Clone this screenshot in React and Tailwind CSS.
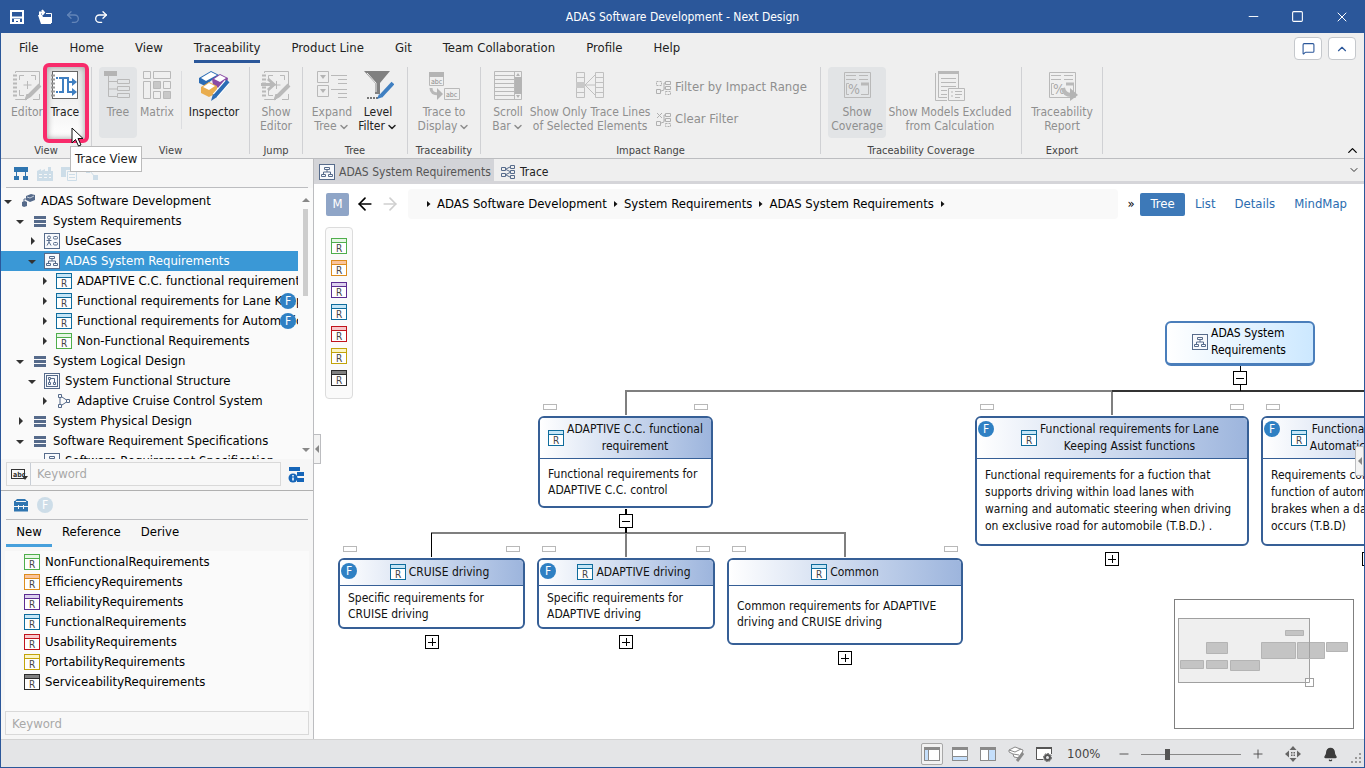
import {
  ArrowLeft,
  ArrowRight,
  Bell,
  ChevronDown,
  ChevronUp,
  MessageSquare,
  Minus,
  Plus,
  Redo2,
  Square,
  Undo2,
  X,
} from "lucide-react";

const COLORS = {
  green: ["#4fae4c", "#e6f6e4"],
  orange: ["#dc8c1e", "#fbc49c"],
  purple: ["#5c2d91", "#dcd0ee"],
  blue: ["#0f6c9c", "#c6e6f7"],
  red: ["#c0141c", "#f8c8cc"],
  yellow: ["#c2a30a", "#fbf5c4"],
  black: ["#2b2b2b", "#808080"],
};

/* ---------- model icons, 16px ---------- */

function ReqIcon({ color = "blue" }) {
  const [line, band] = COLORS[color];
  return (
    <svg width="16" height="16" className="shrink-0">
      <rect x=".5" y=".5" width="15" height="15" fill="#fff" stroke={line} />
      <rect x="1" y="1" width="14" height="3" fill={band} />
      <path d="M1 4.5h14" stroke={line} />
      <text x="5" y="14" fontSize="10" fill="#444">R</text>
    </svg>
  );
}

function HierarchyIcon() {
  return (
    <svg width="16" height="16" className="shrink-0" fill="none" stroke="#566b8b">
      <rect x=".5" y=".5" width="15" height="15" fill="#f7f9fc" />
      <path d="M5.500 3.500h5v2h-5zM2.500 10.500h4v2h-4zM9.500 10.500h4v2h-4zM8 6v2M4.500 10V8h7v2" />
    </svg>
  );
}

function UseCaseIcon() {
  return (
    <svg width="16" height="16" className="shrink-0" fill="none" stroke="#566b8b">
      <rect x=".5" y=".5" width="15" height="15" fill="#f7f9fc" />
      <circle cx="5" cy="4.500" r="1.500" />
      <path d="M5 6v3M2.500 7.500h5M5 9l-2 3.500M5 9l2 3.500" />
      <rect x="9.500" y="3.500" width="4" height="2.500" rx="1" />
      <rect x="9.500" y="9.500" width="4" height="2.500" rx="1" />
    </svg>
  );
}

function StructureIcon() {
  return (
    <svg width="16" height="16" className="shrink-0" fill="none" stroke="#566b8b">
      <rect x=".5" y=".5" width="15" height="15" fill="#f7f9fc" />
      <rect x="2.500" y="2.500" width="11" height="11" />
      <path d="M4.500 4.500h2v2h-2zM5.500 7v2M4.500 9.500h2v2h-2zM7 5.500h3.500V9M9.500 9.500h2v2h-2z" />
    </svg>
  );
}

function FlowIcon() {
  return (
    <svg width="16" height="16" className="shrink-0" fill="none" stroke="#566b8b">
      <path d="M2.500 1.500h3v3h-3zM2.500 11.500h3v3h-3zM10.500 6.500h3v3h-3zM4 5v6M6 4l4.500 3M6 12l4.500-3" />
    </svg>
  );
}

function LinesIcon() {
  return (
    <svg width="16" height="16" className="shrink-0" fill="#566b8b">
      <path d="M2 3h12v3H2zM2 7h12v3H2zM2 11h12v3H2z" />
    </svg>
  );
}

function ProjectIcon() {
  return (
    <svg width="16" height="16" className="shrink-0" fill="#566b8b">
      <path d="M6 3l5-2 4 1v5l-5 2-4-2z" />
      <path d="M2 9l3-1 2 1v4l-3 1-2-1z" />
      <path d="M7 4l3 1 4-2" stroke="#c5cedb" fill="none" />
      <path d="M4 9V6h3" stroke="#566b8b" fill="none" />
    </svg>
  );
}

function TraceTabIcon() {
  return (
    <svg width="16" height="16" className="shrink-0" fill="none" stroke="#566b8b">
      <path d="M1.500 3.500h4v3h-4zM1.500 9.500h4v3h-4zM10.500 1.500h4v3h-4zM10.500 6.500h4v3h-4zM10.500 11.500h4v3h-4zM6 5l4-2M6 5.500l4 2M6 10.500l4-2M6 11l4 2" />
    </svg>
  );
}

function FBadge({ muted }) {
  return (
    <svg width="16" height="16" className="shrink-0">
      <circle cx="8" cy="8" r="8" fill={muted ? "#cddde8" : "#2f80c3"} />
      <text x="8" y="12" fontSize="12" fill="#fff" textAnchor="middle">F</text>
    </svg>
  );
}

/* ---------- ribbon icons, 32px ---------- */

function Svg32({ children, stroke = "#b9b9b9" }) {
  return (
    <svg width="32" height="32" fill="none" stroke={stroke} className="shrink-0">
      {children}
    </svg>
  );
}

function EditorIcon({ arrow }) {
  return (
    <Svg32>
      <path d="M4.500 3V1.500h24V16M4.500 29v.5H16M28.500 24v5.500H22" />
      <path d="M2 5.500h4M2 9.500h4M2 13.500h4M2 17.500h4M2 21.500h4M2 25.500h4" strokeWidth="2" />
      <path d="M8.500 10V5.500H13M20 5.500h4.500V10M8.500 20v5.500H13M16.500 11v8M12.500 15h8" />
      <path d="M29 15L18 26" strokeWidth="4" />
      <path d="M16 24l3 3-5 3z" fill="#b9b9b9" />
      {arrow && <path d="M1 14.500h12M8 9l6 5.500L8 20" strokeWidth="3" />}
    </Svg32>
  );
}

function TraceIcon() {
  return (
    <Svg32 stroke="#666">
      <rect x="3.500" y="1.500" width="25" height="27" fill="#fff" />
      <path d="M2 5.500h4M2 9.500h4M2 13.500h4M2 17.500h4M2 21.500h4M2 25.500h4" stroke="#999" strokeWidth="2" />
      <g stroke="#3f7fc1" strokeWidth="2">
        <path d="M7 8h2M7 22h2" />
        <path d="M10 8h9v14h5M10 22h4V8M19 12h5" />
      </g>
      <path d="M23 8l5 4-5 4zM23 18l5 4-5 4z" fill="#3f7fc1" stroke="none" />
    </Svg32>
  );
}

function TreeIcon() {
  return (
    <Svg32>
      <rect x="2" y="1" width="13" height="5" fill="#b4b4b4" stroke="none" />
      <path d="M6.500 6v20.500H15M6.500 11.500H15M6.500 19H15M15.500 9.500h12v4h-12zM15.500 16.500h12v4h-12zM15.500 23.500h12v4h-12z" />
    </Svg32>
  );
}

function MatrixIcon() {
  return (
    <Svg32>
      <path d="M2.500 1.500h7v7h-7zM12.500 1.500h17v7h-17zM2.500 11.500h7v17h-7zM12.500 21.500h7v7h-7zM22.500 11.500h7v7h-7z" />
      <path d="M12.500 11.500h7v7h-7zM22.500 21.500h7v7h-7z" fill="#c8c8c8" />
    </Svg32>
  );
}

function InspectorIcon() {
  return (
    <svg width="34" height="32" className="shrink-0" strokeLinejoin="round">
      <path d="M2 8L14 1l8 4-11 8-3 3-6-3z" fill="#2b6cb5" />
      <path d="M4 8l10-6 6 3L9 11z" fill="#fff" />
      <path d="M15 9l8-5 8 4-1 6-7 5-7-4z" fill="#8a4aa5" />
      <path d="M17 9l6-4 6 3-6 4z" fill="#fff" />
      <path d="M4 17l8-5 8 4v7l-8 4-8-4z" fill="#e9ad4e" />
      <path d="M6 17l6-4 6 3-6 4z" fill="#fff" />
      <path d="M30 12L18 26" stroke="#fff" strokeWidth="6" />
      <path d="M31 11L18 26" stroke="#2b6cb5" strokeWidth="4" />
      <path d="M16 24l4 3-6 4z" fill="#2b6cb5" />
    </svg>
  );
}

function ExpandTreeIcon() {
  return (
    <Svg32>
      <path d="M1.500 1.500h11v11h-11zM1.500 15.500h11v11h-11z" />
      <path d="M4 5h6l-3 4zM4 19h6l-3 4z" fill="#b4b4b4" stroke="none" />
      <path d="M15 5.500h16M22 9.500h9M22 13.500h9M15 19.500h16M22 23.500h9M22 27.500h9" />
    </Svg32>
  );
}

function LevelFilterIcon() {
  return (
    <Svg32>
      <path d="M2 1h26L18 13v11h-5V13z" fill="#808080" stroke="none" />
      <path d="M5 3l9 10v9" stroke="#f0f0f0" />
      <path d="M5 28h11" stroke="#777" strokeWidth="2" strokeDasharray="2 1" />
      <path d="M31 13L19 26" stroke="#3f7fc1" strokeWidth="4" />
      <path d="M17 24l4 3-6 2z" fill="#3f7fc1" stroke="none" />
    </Svg32>
  );
}

function TraceDisplayIcon() {
  return (
    <Svg32>
      <path d="M1.500 2.500h14v13h-14zM16.500 18.500h15v11h-15z" />
      <rect x="1" y="2" width="15" height="5" fill="#b4b4b4" stroke="none" />
      <text x="3" y="14" fontSize="7" fill="#8a8a8a" stroke="none">abc</text>
      <text x="18" y="27" fontSize="7" fill="#8a8a8a" stroke="none">abc</text>
      <path d="M3 18c0 5 3 6 8 6" strokeWidth="3" />
      <path d="M9 18l6 6-6 6z" fill="#b4b4b4" stroke="none" />
    </Svg32>
  );
}

function ScrollBarIcon() {
  return (
    <Svg32>
      <path d="M2.500 1.500h27v28h-27zM2 5.500h20M2 9.500h20M2 13.500h20M2 17.500h20M2 21.500h20M2 25.500h20M22.500 1v28" />
      <rect x="23" y="7" width="7" height="17" fill="#b4b4b4" stroke="none" />
      <path d="M26 3l2 3h-4zM26 28l2-3h-4z" fill="#b4b4b4" stroke="none" />
    </Svg32>
  );
}

function TraceLinesIcon() {
  return (
    <Svg32 stroke="#c0c0c0">
      <path d="M2.500 2.500h8v25h-8zM2 7.500h8M2 12.500h8M2 17.500h8M2 22.500h8M21.500 2.500h8v25h-8zM22 7.500h8M22 12.500h8M22 17.500h8M22 22.500h8" />
      <rect x="2" y="12" width="9" height="6" fill="#c8c8c8" stroke="none" />
      <path d="M21 5L11 15l10 10M11 15h10" />
    </Svg32>
  );
}

function CoverageIcon({ arrow }) {
  return (
    <Svg32>
      <path d="M3.500 2.500h26v25h-26z" />
      <path d="M5 5.500h10M18 5.500h9M5 9.500h10M18 9.500h9" />
      <path d="M8 13.500H5.500v11H8M20 13.500h7.500v11H20" />
      <path d="M20 14h8" strokeWidth="3" />
      <text x="7" y="24" fontSize="14" fill="#a8a8a8" stroke="none">%</text>
      {arrow && <path d="M17 18c1 5 4 7 8 7" strokeWidth="4" />}
      {arrow && <path d="M24 18l8 7-8 6z" fill="#b4b4b4" stroke="none" />}
    </Svg32>
  );
}

function ExcludedIcon() {
  return (
    <Svg32>
      <path d="M1.500 3v27.500H13M4.500 1.500h20V18M4.500 3v24.500H13" />
      <path d="M4 2.500h21" strokeWidth="3" />
      <path d="M7 8.500h15M7 12.500h15M7 16.500h15M7 20.500h6M7 24.500h6" />
      <path d="M14.500 18.500h16v12h-16z" fill="#f0f0f0" />
      <path d="M17 22h2M17 26h2M21 21.500h7M21 24.500h7M21 27.500h5" />
    </Svg32>
  );
}

function ImpactIcon({ clear }) {
  return (
    <svg width="15" height="15" fill="none" stroke="#b0b0b0" className="shrink-0">
      <path d={clear ? "M1 1l5 5M6 1L1 6" : "M.5 1.500h5v4h-5z"} strokeDasharray={clear ? "none" : "2 1"} />
      <path d="M.5 9.500h4v4h-4zM9.500 1.500h5v3h-5zM9.500 6.500h5v3h-5zM5 11l3-1V3h1M8 8h1" />
      <path d="M9.500 11.500h5v3h-5z" strokeDasharray="2 1" />
    </svg>
  );
}

function SmallChevron() {
  return <ChevronDown className="ml-px inline-block" size={12} strokeWidth={3} />;
}

/* ---------- ribbon ---------- */

function RibbonButton({ icon, lines, width, enabled, active, menu, children }) {
  return (
    <button
      className={`relative flex h-[71px] shrink-0 flex-col items-center rounded-sm pt-[3px] text-[12px] leading-[14px] whitespace-nowrap ${width} ${
        active ? "bg-[#e2e4e6]" : ""
      } ${enabled ? "text-[#222]" : "text-[#8f8f8f]"}`}
    >
      {children}
      <span className="relative">{icon}</span>
      <span className="relative mt-[3px]">
        {lines.map((line, i) => (
          <span key={line} className="block">
            {line}
            {menu && i === lines.length - 1 && <SmallChevron />}
          </span>
        ))}
      </span>
    </button>
  );
}

function RibbonGroup({ title, width, children }) {
  return (
    <section className={`h-[87px] shrink-0 border-r border-[#d0d1d4] ${width}`}>
      <div className="flex h-[71px] justify-center">{children}</div>
      <h2 className="text-center text-[11px] leading-[26px] whitespace-nowrap text-[#444]">{title}</h2>
    </section>
  );
}

function Ribbon() {
  return (
    <div className="flex h-24 shrink-0 border-b border-[#bcbdc0] pt-1">
      <RibbonGroup title="View" width="w-[91px]">
        <RibbonButton icon={<EditorIcon />} lines={["Editor"]} width="w-[38px]" />
        <RibbonButton icon={<TraceIcon />} lines={["Trace"]} width="w-[38px]" enabled>
          <span className="absolute -top-1 -left-[3px] h-20 w-[46px] rounded-md border-4 border-[#f82b6b] bg-linear-to-b from-[#e4e4e4] to-white shadow-[inset_0_0_6px_#999]" />
          <span className="absolute top-[79px] left-6 z-20 border border-[#bbb] bg-white px-1 py-1 text-[13px] leading-4 text-[#222]">
            Trace View
          </span>
          <svg className="absolute top-[60px] left-[25px] z-30" width="14" height="20">
            <path d="M1 1v15l3.500-3.500 3 6.500 2.500-1-3-6.500h5z" fill="#fff" stroke="#111" />
          </svg>
        </RibbonButton>
      </RibbonGroup>
      <RibbonGroup title="View" width="w-[158px]">
        <RibbonButton icon={<TreeIcon />} lines={["Tree"]} width="w-[38px]" active />
        <RibbonButton icon={<MatrixIcon />} lines={["Matrix"]} width="w-10" />
        <span className="mx-1 mt-1 h-[58px] w-px bg-[#dcdde0]" />
        <RibbonButton icon={<InspectorIcon />} lines={["Inspector"]} width="w-14" enabled />
      </RibbonGroup>
      <RibbonGroup title="Jump" width="w-[53px]">
        <RibbonButton icon={<EditorIcon arrow />} lines={["Show", "Editor"]} width="w-11" />
      </RibbonGroup>
      <RibbonGroup title="Tree" width="w-[105px]">
        <RibbonButton icon={<ExpandTreeIcon />} lines={["Expand", "Tree"]} width="w-[46px]" menu />
        <RibbonButton icon={<LevelFilterIcon />} lines={["Level", "Filter"]} width="w-[46px]" menu enabled />
      </RibbonGroup>
      <RibbonGroup title="Traceability" width="w-[73px]">
        <RibbonButton icon={<TraceDisplayIcon />} lines={["Trace to", "Display"]} width="w-14" menu />
      </RibbonGroup>
      <RibbonGroup title="Impact Range" width="w-[340px]">
        <RibbonButton icon={<ScrollBarIcon />} lines={["Scroll", "Bar"]} width="w-11" menu />
        <RibbonButton
          icon={<TraceLinesIcon />}
          lines={["Show Only Trace Lines", "of Selected Elements"]}
          width="w-[120px]"
        />
        <div className="flex flex-col gap-4 pt-3 pr-2 pl-1.5 text-[13px] leading-4 whitespace-nowrap text-[#8f8f8f]">
          <button className="flex items-center gap-1">
            <ImpactIcon /> Filter by Impact Range
          </button>
          <button className="flex items-center gap-1">
            <ImpactIcon clear /> Clear Filter
          </button>
        </div>
      </RibbonGroup>
      <RibbonGroup title="Traceability Coverage" width="w-[201px]">
        <RibbonButton icon={<CoverageIcon />} lines={["Show", "Coverage"]} width="w-[58px]" active />
        <RibbonButton
          icon={<ExcludedIcon />}
          lines={["Show Models Excluded", "from Calculation"]}
          width="w-32"
        />
      </RibbonGroup>
      <RibbonGroup title="Export" width="w-[81px]">
        <RibbonButton icon={<CoverageIcon arrow />} lines={["Traceability", "Report"]} width="w-[68px]" />
      </RibbonGroup>
      <button aria-label="Collapse ribbon" className="mr-1 ml-auto self-end">
        <ChevronUp size={15} />
      </button>
    </div>
  );
}

/* ---------- title bar and menu ---------- */

function TitleBar() {
  return (
    <header className="grid h-[33px] shrink-0 grid-cols-3 items-center bg-[#2b579a] text-white">
      <div className="flex items-center gap-3 pl-2">
        <button aria-label="Save">
          <svg width="16" height="16" fill="none" stroke="#fff" strokeWidth="2">
            <path d="M2 2h12v12H2zM2 8.500h12" />
            <path d="M6 14v-3h4v3" />
          </svg>
        </button>
        <button aria-label="Open">
          <svg width="16" height="16" fill="none" stroke="#fff">
            <path d="M3 7V3.500h4M5 1l2 2.500L5 6" strokeWidth="2" />
            <path d="M9 4.500h5.500V14" />
            <path d="M1 6l3 9h10V8H6L5 6z" fill="#fff" stroke="none" />
          </svg>
        </button>
        <button aria-label="Undo" className="text-[#6385b8]">
          <Undo2 size={16} />
        </button>
        <button aria-label="Redo">
          <Redo2 size={16} />
        </button>
      </div>
      <h1 className="text-center text-[12px] leading-4 whitespace-nowrap">ADAS Software Development - Next Design</h1>
      <div className="flex items-center justify-end gap-[30px] pr-3.5">
        <button aria-label="Minimize"><Minus size={15} strokeWidth={1.500} /></button>
        <button aria-label="Maximize"><Square size={13} strokeWidth={2} /></button>
        <button aria-label="Close"><X size={16} strokeWidth={1.500} /></button>
      </div>
    </header>
  );
}

const MENU = ["File", "Home", "View", "Traceability", "Product Line", "Git", "Team Collaboration", "Profile", "Help"];

function MenuBar() {
  return (
    <nav className="flex h-[30px] shrink-0 items-start gap-[31px] pl-[18px] text-[13px] text-[#222]">
      {MENU.map((item) => (
        <button
          key={item}
          className={`h-[30px] border-b-3 leading-[29px] whitespace-nowrap ${
            item === "Traceability" ? "border-[#2b579a]" : "border-transparent"
          }`}
        >
          {item}
        </button>
      ))}
      <div className="mt-1 mr-2 ml-auto flex gap-1.5 text-[#2b579a]">
        <button aria-label="Feedback" className="flex h-[23px] w-7 items-center justify-center rounded-sm border border-[#c5c8cc] bg-white">
          <MessageSquare size={13} />
        </button>
        <button aria-label="Collapse menu" className="flex h-[23px] w-7 items-center justify-center rounded-sm border border-[#c5c8cc] bg-white">
          <ChevronUp size={14} />
        </button>
      </div>
    </nav>
  );
}

/* ---------- left panel ---------- */

const TREE = [
  { level: 0, label: "ADAS Software Development", icon: <ProjectIcon />, open: true },
  { level: 1, label: "System Requirements", icon: <LinesIcon />, open: true },
  { level: 2, label: "UseCases", icon: <UseCaseIcon /> },
  { level: 2, label: "ADAS System Requirements", icon: <HierarchyIcon />, open: true, selected: true },
  { level: 3, label: "ADAPTIVE C.C. functional requirement", icon: <ReqIcon /> },
  { level: 3, label: "Functional requirements for Lane Keeping", icon: <ReqIcon />, feature: true },
  { level: 3, label: "Functional requirements for Automatic", icon: <ReqIcon />, feature: true },
  { level: 3, label: "Non-Functional Requirements", icon: <ReqIcon color="green" /> },
  { level: 1, label: "System Logical Design", icon: <LinesIcon />, open: true },
  { level: 2, label: "System Functional Structure", icon: <StructureIcon />, open: true },
  { level: 3, label: "Adaptive Cruise Control System", icon: <FlowIcon /> },
  { level: 1, label: "System Physical Design", icon: <LinesIcon /> },
  { level: 1, label: "Software Requirement Specifications", icon: <LinesIcon />, open: true },
  { level: 2, label: "Software Requirement Specification", icon: <HierarchyIcon />, leaf: true },
];

const INDENT = ["pl-0", "pl-3", "pl-6", "pl-9"];

function TreeRow({ item }) {
  return (
    <li
      className={`relative flex h-5 items-center overflow-hidden whitespace-nowrap ${INDENT[item.level]} ${
        item.selected ? "bg-[#3a98d6] text-white" : "text-black"
      }`}
    >
      <svg width="15" height="10" className="mr-1 shrink-0" fill="#333">
        {!item.leaf && <path d={item.open ? "M3 4h8l-4 4z" : "M6 1l4 4-4 4z"} />}
      </svg>
      {item.icon}
      <span className="ml-[5px]">{item.label}</span>
      {item.feature && (
        <span className="absolute right-0.5">
          <FBadge />
        </span>
      )}
    </li>
  );
}

const PALETTE = [
  ["NonFunctionalRequirements", "green"],
  ["EfficiencyRequirements", "orange"],
  ["ReliabilityRequirements", "purple"],
  ["FunctionalRequirements", "blue"],
  ["UsabilityRequirements", "red"],
  ["PortabilityRequirements", "yellow"],
  ["ServiceabilityRequirements", "black"],
];

function LeftPanel() {
  return (
    <aside className="flex w-[313px] shrink-0 flex-col border-r border-[#bcbdc0] bg-[#f6f6f6] text-[13px]">
      <div className="mx-[5px] flex h-[29px] shrink-0 items-center gap-2 border-b border-[#bcbdc0] pl-[7px]">
        <svg width="16" height="16" fill="#2f75b0">
          <path d="M1 2h14v5H1zM1 11h5v4H1zM10 11h5v4h-5z" />
          <path d="M3.500 7v4M12.500 7v4" stroke="#2f75b0" />
        </svg>
        <svg width="16" height="16" fill="#cddde8">
          <path d="M0 6l4-2v2l4-2v2h3V2h3v4h2v10H0z" />
          <path d="M2 9.500h12M2 12.500h12" stroke="#f6f6f6" strokeDasharray="3 2" />
        </svg>
        <svg width="16" height="16" fill="#cddde8">
          <path d="M0 2h10v3H5v7H0z" />
          <path d="M6.500 6.500h9v9h-9zM8 9.500h6M8 12.500h6" fill="#f6f6f6" stroke="#cddde8" />
        </svg>
        <svg width="16" height="16" fill="#cddde8">
          <path d="M1 4h4v4H1zM8 1h4v4H8zM8 10h5v5H8z" />
          <path d="M5 6l5 6" stroke="#cddde8" />
        </svg>
      </div>
      <div className="flex h-[271px] shrink-0 overflow-hidden bg-[#fafafa] pt-[3px]">
        <ul className="min-w-0 flex-1">
          {TREE.map((item) => (
            <TreeRow key={item.label} item={item} />
          ))}
        </ul>
        <div className="flex w-[15px] shrink-0 flex-col items-center justify-between pt-1.5 pb-1.5">
          <svg width="8" height="6" fill="#888"><path d="M0 5h8L4 1z" /></svg>
          <span className="mt-1.5 mb-auto h-[87px] w-[5px] bg-[#cdcdcd]" />
          <svg width="8" height="6" fill="#888"><path d="M0 1h8L4 5z" /></svg>
        </div>
      </div>
      <div className="flex h-8 shrink-0 items-start gap-[7px] border-b border-[#b0b0b0] pt-[3px] pl-[5px]">
        <div className="flex h-6 w-[275px] items-center border border-[#d9d9d9] bg-[#f8f8f8]">
          <button aria-label="Match text" className="flex h-full w-6 items-center justify-center border-r border-[#c8ced6]">
            <svg width="18" height="12" fill="none" stroke="#333">
              <rect x="1.500" y="1.500" width="13" height="9" />
              <text x="3" y="9" fontSize="7" fontWeight="bold" fill="#333" stroke="none">abc</text>
              <path d="M12 8h6l-3 4z" fill="#333" stroke="none" />
            </svg>
          </button>
          <input aria-label="Search model" placeholder="Keyword" className="min-w-0 flex-1 px-1.5 outline-none placeholder:text-[#a8a8a8]" />
        </div>
        <button aria-label="Model info" className="mt-1">
          <svg width="17" height="17" fill="#1565b8">
            <path d="M1 1h11v4H1zM9 6h7v4H9zM9 12h7v4H9z" />
            <circle cx="5" cy="12" r="4.500" />
            <path d="M5 9v1.500M5 11.500v3" stroke="#fff" strokeWidth="1.500" />
          </svg>
        </button>
      </div>
      <div className="mx-[5px] flex h-[29px] shrink-0 items-center gap-2 border-b border-[#bcbdc0] pl-[7px]">
        <svg width="16" height="16" fill="#2f75b0">
          <path d="M2 4l2-2h8l2 2h1v5H1V4zM1 10h14v4.500H1z" />
          <path d="M3 4.500h10" stroke="#f6f6f6" />
          <path d="M5.500 8v4M10.500 8v4" stroke="#f6f6f6" />
        </svg>
        <FBadge muted />
      </div>
      <div role="tablist" className="flex h-[27px] shrink-0 pl-[5px]">
        <button role="tab" className="w-[46px] border-b-3 border-[#47a0dc]">New</button>
        <button role="tab" className="ml-2.5 border-b-3 border-transparent">Reference</button>
        <button role="tab" className="ml-5 border-b-3 border-transparent">Derive</button>
      </div>
      <ul className="mx-1 mt-1 flex-1 bg-[#fafafa] pt-px">
        {PALETTE.map(([label, color]) => (
          <li key={label} className="flex h-5 items-center gap-[5px] pl-[19px]">
            <ReqIcon color={color} />
            {label}
          </li>
        ))}
      </ul>
      <input
        aria-label="Search palette"
        placeholder="Keyword"
        className="mx-1 mb-1 h-6 shrink-0 border border-[#d9d9d9] bg-[#f8f8f8] px-1.5 outline-none placeholder:text-[#a8a8a8]"
      />
    </aside>
  );
}

/* ---------- diagram ---------- */

const NODES = [
  { x: 224, y: 192, w: 175, h: 92, head: 40, title: ["ADAPTIVE C.C. functional", "requirement"], text: ["Functional requirements for", "ADAPTIVE C.C. control"], open: true },
  { x: 661, y: 192, w: 274, h: 130, head: 40, feature: true, title: ["Functional requirements for Lane", "Keeping Assist functions"], text: ["Functional requirements for a fuction that", "supports driving within load lanes with", "warning and automatic steering when driving", "on exclusive road for automobile (T.B.D.) ."] },
  { x: 947, y: 192, w: 216, h: 130, head: 40, feature: true, title: ["Functional requirements for", "Automatic Braking functions"], text: ["Requirements concerning", "function of automatic", "brakes when a danger", "occurs (T.B.D)"] },
  { x: 24, y: 334, w: 187, h: 71, head: 25, feature: true, title: ["CRUISE driving"], text: ["Specific requirements for", "CRUISE driving"] },
  { x: 223, y: 334, w: 178, h: 71, head: 25, feature: true, title: ["ADAPTIVE driving"], text: ["Specific requirements for", "ADAPTIVE driving"] },
  { x: 413, y: 334, w: 236, h: 87, head: 25, title: ["Common"], text: ["Common requirements for ADAPTIVE", "driving and CRUISE driving"] },
];

function Expander({ open }) {
  return (
    <button aria-label={open ? "Collapse" : "Expand"} className="absolute top-full left-1/2 mt-2 -ml-[7px] block">
      <svg width="14" height="14" fill="#fff" stroke="#000">
        <rect x=".5" y=".5" width="13" height="13" />
        <path d={open ? "M3 7.500h8" : "M3 7.500h8M7.500 3v8"} />
      </svg>
    </button>
  );
}

function Node({ node }) {
  return (
    <article
      className="absolute flex flex-col rounded-md border-2 border-[#365f96] bg-white text-[12px] whitespace-nowrap text-[#111]"
      style={{ left: node.x, top: node.y, width: node.w, height: node.h }}
    >
      <span className="absolute -top-3.5 left-[3px] h-1.5 w-3.5 border border-[#b8b8b8] bg-white" />
      <span className="absolute -top-3.5 right-[3px] h-1.5 w-3.5 border border-[#b8b8b8] bg-white" />
      {node.feature && (
        <span className="absolute top-[3px] left-px">
          <FBadge />
        </span>
      )}
      <h3
        className={`flex shrink-0 items-center justify-center gap-[3px] rounded-t-sm border-b border-[#365f96] bg-linear-to-r from-white to-[#9db5dd] pb-px leading-[17px] ${
          node.feature ? "pl-4" : ""
        }`}
        style={{ height: node.head + 1 }}
      >
        <ReqIcon />
        <span className="text-center">
          {node.title.map((line) => (
            <span key={line} className="block">{line}</span>
          ))}
        </span>
      </h3>
      <p className={`my-auto px-2 pb-0.5 ${node.text.length > 2 ? "leading-[17px]" : "leading-4"}`}>
        {node.text.map((line) => (
          <span key={line} className="block">{line}</span>
        ))}
      </p>
      <Expander open={node.open} />
    </article>
  );
}

function Connectors() {
  return (
    <svg className="absolute inset-0 h-full w-full" fill="none" stroke="#7f7f7f" strokeWidth="2">
      <path d="M312 191V167H798M798 167v24" />
      <path d="M798 167H1400" stroke="#333" />
      <path d="M312 333v-24M312 309h219v24M312 309H117" />
      <path d="M117.500 309v24M926.500 142v25" stroke="#000" strokeWidth="1" />
      <path d="M312 285v24" stroke="#000" />
    </svg>
  );
}

function MiniMap() {
  return (
    <svg className="absolute right-[9px] bottom-[9px]" width="181" height="131" fill="#fff">
      <rect x=".5" y=".5" width="179" height="129" stroke="#808080" />
      <rect x="4.500" y="19.500" width="131" height="64" fill="#efefef" stroke="#a0a0a0" />
      <g fill="#c4c4c4" stroke="#b4b4b4">
        <path d="M111.500 31.500h18v5h-18zM32.500 43.500h21v11h-21zM87.500 43.500h34v16h-34zM123.500 43.500h27v16h-27zM152.500 43.500h21v9h-21zM6.500 61.500h23v8h-23zM32.500 61.500h21v8h-21zM56.500 61.500h29v10h-29z" />
      </g>
      <path d="M135.500 43v16" stroke="#a0a0a0" />
      <rect x="131.500" y="79.500" width="8" height="8" stroke="#a0a0a0" />
      <path d="M135.500 79v4.500H131" stroke="#a0a0a0" />
    </svg>
  );
}

function Crumb({ children }) {
  return (
    <li className="flex items-center">
      <svg width="5" height="8" className="mx-1.5" fill="#111"><path d="M1 1l3.500 3L1 7z" /></svg>
      <a href="#">{children}</a>
    </li>
  );
}

function Canvas() {
  return (
    <div className="relative min-h-0 flex-1 overflow-hidden">
      <Connectors />
      <div className="relative mt-[3px] ml-[11px] flex w-7 flex-col items-center gap-1.5 rounded-sm border border-[#dcdcdc] bg-[#fafafa] pt-2.5 pb-3">
        {PALETTE.map(([label, color]) => (
          <button key={label} aria-label={label} className="block">
            <ReqIcon color={color} />
          </button>
        ))}
      </div>
      <article className="absolute top-[97px] left-[851px] flex h-[45px] w-[150px] items-center justify-center gap-[3px] rounded-md border-2 border-b-3 border-[#4a7ebb] bg-linear-to-r from-white to-[#cce8ff] pr-0.5 pb-0.5 text-[12px] leading-[17px] whitespace-nowrap">
        <HierarchyIcon />
        <span>
          <span className="block">ADAS System</span>
          <span className="block">Requirements</span>
        </span>
        <Expander open />
      </article>
      {NODES.map((node) => (
        <Node key={node.title.join(" ")} node={node} />
      ))}
      <MiniMap />
      <button aria-label="Hide left panel" className="absolute top-[210px] -left-px flex h-[30px] w-2 items-center justify-center border border-[#bcbdc0] bg-[#f3f3f3]">
        <svg width="4" height="8" fill="#888"><path d="M4 0v8L0 4z" /></svg>
      </button>
      <button aria-label="Show right panel" className="absolute top-[222px] right-0 flex h-[30px] w-[9px] items-center justify-center border border-[#bcbdc0] bg-[#f3f3f3]">
        <svg width="4" height="8" fill="#888"><path d="M4 0v8L0 4z" /></svg>
      </button>
    </div>
  );
}

function Workspace() {
  return (
    <main className="flex min-w-0 flex-1 flex-col bg-white">
      <div role="tablist" className="flex h-[25px] shrink-0 items-stretch border-b-3 border-[#d5d5d9] bg-[#efefef] text-[12px] text-[#333]">
        <button role="tab" className="flex w-[180px] items-center gap-1 bg-[#d3d4d8] pt-[3px] pl-[5px] whitespace-nowrap text-[#555]">
          <HierarchyIcon />
          ADAS System Requirements
        </button>
        <button role="tab" className="flex items-center gap-1 pt-[3px] pl-[6px] text-[#222]">
          <TraceTabIcon />
          Trace
        </button>
        <button aria-label="More tabs" className="mr-1 ml-auto">
          <ChevronDown size={12} />
        </button>
      </div>
      <div className="flex h-10 shrink-0 items-center text-[13px]">
        <button className="ml-3 h-[23px] w-[23px] rounded-xs bg-[#8fa5c7] text-center text-white">M</button>
        <button aria-label="Back" className="ml-1.5"><ArrowLeft size={20} /></button>
        <button aria-label="Forward" className="ml-[5px] text-[#cfcfcf]"><ArrowRight size={20} /></button>
        <ol className="ml-2 flex h-[30px] min-w-0 flex-1 items-center rounded-sm bg-[#f9f9f9] pl-3 whitespace-nowrap">
          <Crumb>ADAS Software Development</Crumb>
          <Crumb>System Requirements</Crumb>
          <Crumb>ADAS System Requirements</Crumb>
          <svg width="5" height="8" className="ml-1.5" fill="#111"><path d="M1 1l3.500 3L1 7z" /></svg>
        </ol>
        <div className="mr-[17px] ml-1.5 flex items-center text-[#2b6cb0]">
          <span className="w-[14px] text-center text-black">»</span>
          <button className="ml-0.5 h-[23px] w-[45px] rounded-xs bg-[#3d79b8] text-white">Tree</button>
          <button className="ml-2.5">List</button>
          <button className="ml-[19px]">Details</button>
          <button className="ml-[19px]">MindMap</button>
        </div>
      </div>
      <Canvas />
    </main>
  );
}

/* ---------- status bar ---------- */

function PaneIcon({ pane }) {
  return (
    <svg width="16" height="14" fill="#fff" stroke="#8a8a8a">
      <rect x=".5" y=".5" width="15" height="13" />
      <path d={pane} fill="#c5dffb" />
      <path d="M0 1.500h16" strokeWidth="3" />
    </svg>
  );
}

function StatusBar() {
  return (
    <footer className="flex h-7 shrink-0 items-center justify-end border-t border-[#d3d3d3] bg-[#e4e5e7] pt-px text-[13px] text-[#444]">
      <button aria-label="Left pane" className="flex h-[22px] w-[22px] items-center justify-center rounded-xs border border-[#a8a8a8] bg-[#f2f2f2]">
        <PaneIcon pane="M.5 2.500h4v11h-4z" />
      </button>
      <button aria-label="Bottom pane" className="ml-[9px]"><PaneIcon pane="M.5 9.500h15v4H.5z" /></button>
      <button aria-label="Right pane" className="ml-3"><PaneIcon pane="M8.500 2.500h7v11h-7z" /></button>
      <button aria-label="Inspector" className="ml-3">
        <svg width="17" height="17" fill="#fff" stroke="#8a8a8a">
          <path d="M1 4l6-3 8 3-1 4-3 4-5-1-1-3-4-2z" />
          <path d="M1 4l6 2 6-3M5 8l6 1" fill="none" />
          <path d="M15 7l-6 8" strokeWidth="3" />
        </svg>
      </button>
      <button aria-label="View settings" className="ml-[11px]">
        <svg width="17" height="16" fill="#fff" stroke="#555">
          <path d="M7 13.500H.5V2.500h15V8" />
          <path d="M0 2h16" strokeWidth="2" />
          <circle cx="11.500" cy="11.500" r="2.500" strokeWidth="2" fill="none" />
          <circle cx="11.500" cy="11.500" r="4" strokeDasharray="2 1" fill="none" />
        </svg>
      </button>
      <span className="ml-3.5 w-9">100%</span>
      <button aria-label="Zoom out" className="ml-3.5"><Minus size={14} strokeWidth={1.500} /></button>
      <input
        type="range"
        aria-label="Zoom"
        min="0"
        max="400"
        defaultValue="100"
        className="mx-2.5 h-4 w-[100px] appearance-none bg-transparent bg-linear-to-b from-[#888] to-[#888] bg-[length:100%_1px] bg-center bg-no-repeat [&::-webkit-slider-thumb]:h-[11px] [&::-webkit-slider-thumb]:w-[5px] [&::-webkit-slider-thumb]:appearance-none [&::-webkit-slider-thumb]:bg-[#555]"
      />
      <button aria-label="Zoom in"><Plus size={14} strokeWidth={1.500} /></button>
      <button aria-label="Fit" className="ml-5">
        <svg width="16" height="16" fill="#666">
          <path d="M8 0l3.500 4h-7zM8 16l3.500-4h-7zM0 8l4-3.500v7zM16 8l-4-3.500v7zM6 6h1.500v1.500H6zM8.500 6H10v1.500H8.500zM6 8.500h1.500V10H6zM8.500 8.500H10V10H8.500z" />
        </svg>
      </button>
      <button aria-label="Notifications" className="ml-[22px]">
        <Bell size={15} fill="#3c3c3c" stroke="#3c3c3c" />
      </button>
      <svg width="12" height="12" className="mt-2 mr-0.5 ml-3" fill="#9a9a9a">
        <path d="M9 1h2v2H9zM5 5h2v2H5zM9 5h2v2H9zM1 9h2v2H1zM5 9h2v2H5zM9 9h2v2H9z" />
      </svg>
    </footer>
  );
}

export default function App() {
  return (
    <div className="flex h-screen flex-col overflow-hidden border-x border-b border-[#2b579a] bg-[#efefef] font-['DejaVu_Sans_Condensed','DejaVu_Sans',sans-serif]">
      <TitleBar />
      <MenuBar />
      <Ribbon />
      <div className="flex min-h-0 flex-1">
        <LeftPanel />
        <Workspace />
      </div>
      <StatusBar />
    </div>
  );
}
